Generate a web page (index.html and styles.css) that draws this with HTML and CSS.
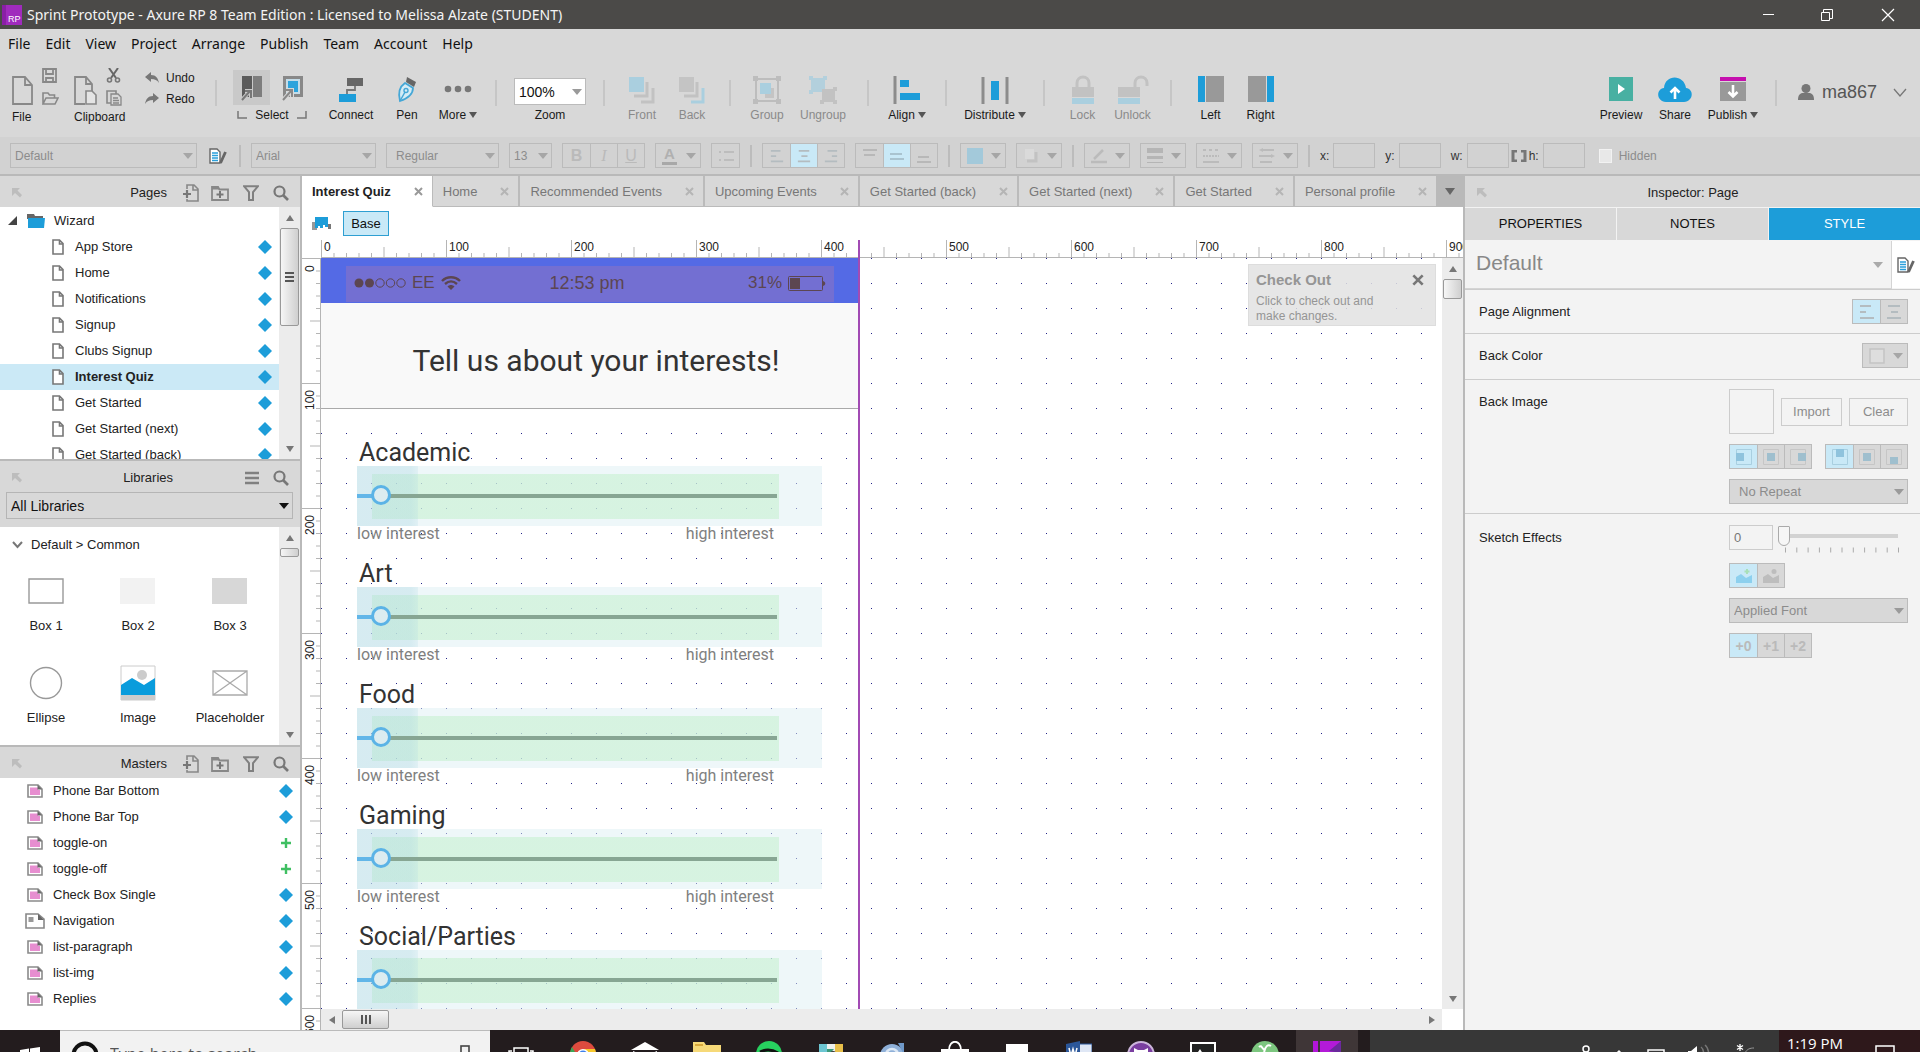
FILE: index.html
```html
<!DOCTYPE html>
<html lang="en">
<head>
<meta charset="utf-8">
<title>Sprint Prototype - Axure RP 8 Team Edition</title>
<link rel="stylesheet" href="styles.css">
</head>
<body>
<svg class="defs" aria-hidden="true">
  <defs>
    <symbol id="page" viewBox="0 0 12 16"><path d="M1 1h6.500l3.500 3.500v10.500h-10zM7.500 1v4h3.500" fill="#fff" stroke="#777" stroke-width="1.600"/></symbol>
    <symbol id="diamond" viewBox="0 0 14 14"><path d="M7 0l7 7-7 7-7-7z" fill="#1d9dd9"/></symbol>
    <symbol id="plus" viewBox="0 0 14 14"><path d="M7 2v10M2 7h10" stroke="#3fbf62" stroke-width="2.400"/></symbol>
    <symbol id="master" viewBox="0 0 16 14"><path d="M1 1h10l4 4v8h-14z" fill="#fff" stroke="#8a8a8a" stroke-width="1.600"/><path d="M3 3.500h8v2.500h2v5h-10z" fill="#e78ed0"/><path d="M10.500 1l4.500 4.500h-4.500z" fill="#666"/></symbol>
    <symbol id="navpage" viewBox="0 0 20 16"><path d="M1 1h12l6 5v9h-18z" fill="#fff" stroke="#888" stroke-width="1.600"/><path d="M3.500 4h5v5h-5z" fill="#999"/><path d="M13 1l6 6h-6z" fill="#666"/></symbol>
    <symbol id="dock" viewBox="0 0 10 10"><path d="M0 0h8l-2.500 2.500 4.500 4.500-2 2.500-5-4.500-3 3z" fill="#bdbdbd"/></symbol>
    <symbol id="addpage" viewBox="0 0 16 18"><path d="M4 5v-4h7l4 4v12h-11v-2M10 1v5h5" fill="none" stroke="#888" stroke-width="1.600"/><path d="M4 6v8M0 10h8" stroke="#777" stroke-width="2.200"/></symbol>
    <symbol id="addfolder" viewBox="0 0 18 16"><path d="M1 2h6l1.500 2.500h8.500v10.500h-16z" fill="none" stroke="#888" stroke-width="1.800"/><path d="M1 1h6l2 3.500h-8z" fill="#888"/><path d="M9 6v7M5.500 9.500h7" stroke="#777" stroke-width="2"/></symbol>
    <symbol id="filter" viewBox="0 0 16 16"><path d="M1 1.200h14l-5 6v7.800h-4v-7.800z" fill="none" stroke="#808080" stroke-width="2"/></symbol>
    <symbol id="search" viewBox="0 0 16 16"><circle cx="6.500" cy="6.500" r="5" fill="none" stroke="#777" stroke-width="2.200"/><path d="M10 10l5 5" stroke="#777" stroke-width="2.600"/></symbol>
    <symbol id="cross" viewBox="0 0 9 9"><path d="M1 1l7 7M8 1l-7 7" stroke="currentColor" stroke-width="2"/></symbol>
    <symbol id="stylepage" viewBox="0 0 18 16"><path d="M1 1h7l3 3v11h-10z" fill="#fff" stroke="#666" stroke-width="1.400"/><path d="M3 5h6M3 7.500h6M3 10h6M3 12.500h6" stroke="#2a9fda" stroke-width="1.400"/><path d="M16.500 4l-5 11" stroke="#666" stroke-width="2.800"/></symbol>
    <symbol id="al" viewBox="0 0 16 16"><path d="M1 2h11M1 8h6M1 14h14" stroke="#b4bcc0" stroke-width="2"/></symbol>
    <symbol id="ac" viewBox="0 0 16 16"><path d="M2 2h12M5 8h7M1 14h14" stroke="#b4bcc0" stroke-width="2"/></symbol>
    <symbol id="ar" viewBox="0 0 16 16"><path d="M4 2h11M9 8h6M1 14h14" stroke="#b4bcc0" stroke-width="2"/></symbol>
  </defs>
</svg>

<header class="titlebar">
  <svg class="logo" viewBox="0 0 20 20"><rect width="20" height="20" fill="#a02bbd"/><rect width="4" height="20" fill="#8a1fa6"/><text x="6" y="17" font-size="9" fill="#fff" font-family="Liberation Sans, sans-serif">RP</text></svg>
  <h1>Sprint Prototype - Axure RP 8 Team Edition : Licensed to Melissa Alzate (STUDENT)</h1>
  <div class="winbtns">
    <button aria-label="Minimize"><svg width="14" height="14"><path d="M1 6.500h11" stroke="#fff"/></svg></button>
    <button aria-label="Restore"><svg width="14" height="14"><path d="M1.500 4.500h8v8h-8zM3.500 4.500v-3h9v9h-3" fill="none" stroke="#fff"/></svg></button>
    <button aria-label="Close"><svg width="14" height="14"><path d="M1 1l12 12M13 1l-12 12" stroke="#fff" stroke-width="1.200"/></svg></button>
  </div>
</header>

<nav class="menubar">
  <button>File</button><button>Edit</button><button>View</button><button>Project</button><button>Arrange</button><button>Publish</button><button>Team</button><button>Account</button><button>Help</button>
</nav>

<section class="toolbar" aria-label="Tools">
  <div class="filegroup">
    <div class="icons">
      <svg width="22" height="30" viewBox="0 0 22 30"><path d="M1 1h12l7 8v19h-19zM13 1v8h7" fill="none" stroke="#888" stroke-width="1.800"/></svg>
      <div class="stack">
        <svg width="15" height="15" viewBox="0 0 15 15"><path d="M1 1h13v13h-13zM4 1v5h7v-5M4 14v-4h7v4" fill="none" stroke="#888" stroke-width="1.800"/></svg>
        <svg width="17" height="15" viewBox="0 0 17 15"><path d="M1 13v-11h5l1.500 2h5v3M1 13l3-6h12l-3 6z" fill="none" stroke="#888" stroke-width="1.600"/></svg>
      </div>
    </div>
    <span class="cap">File</span>
  </div>
  <div class="filegroup">
    <div class="icons">
      <svg width="24" height="30" viewBox="0 0 24 30"><path d="M11 28h-10v-27h11l6 7v7M12 1v7h6" fill="none" stroke="#888" stroke-width="1.800"/><path d="M12 15h6l4 4v9h-10z" fill="#e4e4e4" stroke="#888" stroke-width="1.600"/></svg>
      <div class="stack">
        <svg width="15" height="15" viewBox="0 0 15 15"><path d="M3 0l7 10M12 0l-7 10" stroke="#666" stroke-width="2"/><circle cx="3.500" cy="12" r="2" fill="none" stroke="#777" stroke-width="1.600"/><circle cx="11.500" cy="12" r="2" fill="none" stroke="#777" stroke-width="1.600"/></svg>
        <svg width="16" height="16" viewBox="0 0 16 16"><path d="M5 13h-4v-12h9v3" fill="none" stroke="#888" stroke-width="1.600"/><path d="M5 4h7l3 3v8h-10zM7 8h5M7 10.500h6M7 13h6" fill="none" stroke="#888" stroke-width="1.300"/></svg>
      </div>
    </div>
    <span class="cap">Clipboard</span>
  </div>
  <div class="undo">
    <button><svg width="14" height="12" viewBox="0 0 14 12"><path d="M6 0v3c5 0 7 3 8 8-2-3-4-4-8-4v3l-6-5z" fill="#777"/></svg>Undo</button>
    <button><svg width="14" height="12" viewBox="0 0 14 12"><path d="M8 0v3c-5 0-7 3-8 8 2-3 4-4 8-4v3l6-5z" fill="#777"/></svg>Redo</button>
  </div>
  <i class="sep"></i>
  <div class="selectgroup">
    <div class="icons">
      <button class="on" aria-label="Select intersected"><svg width="22" height="26" viewBox="0 0 22 26"><path d="M1 1h10v21h-10z" fill="#5a5a5a"/><path d="M12 1h9v21h-9z" fill="#7d7d7d"/><path d="M1 25l7-8M4 16h6v7" fill="none" stroke="#c9c9c9" stroke-width="4"/><path d="M1 25l8-9M4 16h6v7" fill="none" stroke="#777" stroke-width="2"/></svg></button>
      <button aria-label="Select contained"><svg width="22" height="26" viewBox="0 0 22 26"><path d="M2.500 2.500h17v18h-17z" fill="#c4dce8" stroke="#888" stroke-width="3"/><path d="M6 6h10v11h-10z" fill="#2ca3dc"/><path d="M1 25l8-9M4 15h6v7" fill="none" stroke="#d8d8d8" stroke-width="4"/><path d="M1 25l8-9M4 15h6v7" fill="none" stroke="#888" stroke-width="2"/></svg></button>
    </div>
    <span class="cap"><svg width="10" height="8"><path d="M1 0v7h9" fill="none" stroke="#777" stroke-width="1.500"/></svg>Select<svg width="10" height="8"><path d="M9 0v7h-9" fill="none" stroke="#777" stroke-width="1.500"/></svg></span>
  </div>
  <button class="tool"><svg width="26" height="26" viewBox="0 0 26 26"><path d="M9 1h16v8h-16z" fill="#666"/><path d="M17 9v4h-8v5" fill="none" stroke="#777" stroke-width="1.800"/><path d="M1 17h17v8h-17z" fill="#1d9dd9"/></svg><span>Connect</span></button>
  <button class="tool"><svg width="20" height="26" viewBox="0 0 20 26"><path d="M10 0l9 5-2 5-8-5z" fill="#666"/><path d="M8 6l8 5c0 6-4 10-13 13-2-8-1-14 5-18z" fill="#d5ecf6" stroke="#45a7d6" stroke-width="1.800"/><path d="M3 24l5-9" stroke="#45a7d6" stroke-width="1.500"/><circle cx="9" cy="13.500" r="2" fill="none" stroke="#45a7d6" stroke-width="1.400"/></svg><span>Pen</span></button>
  <button class="tool"><svg width="28" height="26" viewBox="0 0 28 26"><circle cx="4" cy="12" r="3.300" fill="#777"/><circle cx="14" cy="12" r="3.300" fill="#777"/><circle cx="24" cy="12" r="3.300" fill="#777"/></svg><span class="drop">More</span></button>
  <i class="sep"></i>
  <div class="zoom">
    <span class="sel"><select id="zoom" aria-label="Zoom"><option>100%</option></select></span>
    <label class="cap" for="zoom">Zoom</label>
  </div>
  <i class="sep"></i>
  <div class="pair">
    <button class="tool dim"><svg width="26" height="26" viewBox="0 0 26 26"><path d="M0 0h15v15h-15z" fill="#aacfdf"/><path d="M18 5v14h-13M24 11v14h-12" fill="none" stroke="#c2c2c2" stroke-width="3"/></svg><span>Front</span></button>
    <button class="tool dim"><svg width="26" height="26" viewBox="0 0 26 26"><path d="M0 0h15v15h-15z" fill="#c4c4c4"/><path d="M18 5v14h-13" fill="none" stroke="#c2c2c2" stroke-width="3"/><path d="M24 11v14h-12" fill="none" stroke="#aacfdf" stroke-width="3"/></svg><span>Back</span></button>
  </div>
  <i class="sep"></i>
  <div class="pair wide">
    <button class="tool dim"><svg width="28" height="28" viewBox="0 0 28 28"><path d="M3 3h22v22h-22z" fill="none" stroke="#bdbdbd" stroke-width="2"/><path d="M0 0h5v5h-5zM23 0h5v5h-5zM0 23h5v5h-5zM23 23h5v5h-5z" fill="#bdbdbd"/><path d="M12 12h9v10h-9z" fill="#c4c4c4"/><path d="M7 7h11v11h-11z" fill="#aacfdf"/></svg><span>Group</span></button>
    <button class="tool dim"><svg width="28" height="28" viewBox="0 0 28 28"><path d="M2 2h14v14h-14z" fill="#b3d0dd"/><path d="M0 0h4v4h-4zM14 0h4v4h-4zM0 14h4v4h-4z" fill="#b3d0dd"/><path d="M13 13h13v13h-13z" fill="#c2c2c2"/><path d="M24 11h4v4h-4zM11 24h4v4h-4zM24 24h4v4h-4z" fill="#c2c2c2"/></svg><span>Ungroup</span></button>
  </div>
  <i class="sep"></i>
  <button class="tool"><svg width="28" height="28" viewBox="0 0 28 28"><path d="M2 0v28" stroke="#8c8c8c" stroke-width="3"/><path d="M7 4h9v7h-9zM7 17h20v7h-20z" fill="#1d9dd9"/></svg><span class="drop">Align</span></button>
  <i class="sep"></i>
  <button class="tool"><svg width="28" height="28" viewBox="0 0 28 28"><path d="M2 1v27M26 1v27" stroke="#8c8c8c" stroke-width="3"/><path d="M10 5h8v19h-8z" fill="#1d9dd9"/></svg><span class="drop">Distribute</span></button>
  <i class="sep"></i>
  <div class="pair">
    <button class="tool dim"><svg width="24" height="28" viewBox="0 0 24 28"><path d="M6 12v-5c0-8 12-8 12 0v5" fill="none" stroke="#c2c2c2" stroke-width="3"/><path d="M1 11h22v10h-22z" fill="#c2c2c2"/><path d="M1 22h22v6h-22z" fill="#aacfdf"/></svg><span>Lock</span></button>
    <button class="tool dim"><svg width="32" height="28" viewBox="0 0 32 28"><path d="M18 12v-5c0-8 12-8 12 0v3" fill="none" stroke="#c2c2c2" stroke-width="3"/><path d="M1 11h22v10h-22z" fill="#c2c2c2"/><path d="M1 22h22v6h-22z" fill="#aacfdf"/></svg><span>Unlock</span></button>
  </div>
  <i class="sep"></i>
  <div class="pair">
    <button class="tool"><svg width="26" height="26"><path d="M0 0h7v26h-7z" fill="#1d9dd9"/><path d="M8 0h18v26h-18z" fill="#999"/></svg><span>Left</span></button>
    <button class="tool"><svg width="26" height="26"><path d="M19 0h7v26h-7z" fill="#1d9dd9"/><path d="M0 0h18v26h-18z" fill="#999"/></svg><span>Right</span></button>
  </div>
  <span></span>
  <div class="pair share">
    <button class="tool"><svg width="24" height="26"><path d="M0 1h24v24h-24z" fill="#48b0a2"/><path d="M9 8l7 5-7 5z" fill="#fff"/></svg><span>Preview</span></button>
    <button class="tool"><svg width="34" height="26" viewBox="0 0 34 26"><path d="M8 25c-10-1-10-13-2-14 1-14 20-14 22 0 8 1 8 13-2 14z" fill="#1d9dd9"/><path d="M17 22v-9M12.500 15.500l4.500-4.500 4.500 4.500" fill="none" stroke="#fff" stroke-width="2.600"/></svg><span>Share</span></button>
    <button class="tool"><svg width="26" height="26"><path d="M0 1h26v4h-26z" fill="#c50fae"/><path d="M0 6h26v19h-26z" fill="#999"/><path d="M13 9v11M8.500 16l4.500 4.500 4.500-4.500" fill="none" stroke="#fff" stroke-width="2.600"/></svg><span class="drop">Publish</span></button>
  </div>
  <i class="sep"></i>
  <button class="user"><svg width="16" height="16" viewBox="0 0 16 16"><circle cx="8" cy="4.500" r="4.500" fill="#777"/><path d="M0 16c0-5 2-7 5-7h6c3 0 5 2 5 7z" fill="#777"/></svg>ma867<svg class="chev" width="14" height="9"><path d="M1 1l6 7 6-7" fill="none" stroke="#777" stroke-width="1.300"/></svg></button>
</section>

<section class="formatbar" aria-label="Format">
  <span class="sel w-style"><select aria-label="Style"><option>Default</option></select></span>
  <button class="plain" aria-label="Manage styles"><svg width="18" height="16"><use href="#stylepage"/></svg></button>
  <i class="sep"></i>
  <span class="sel w-font"><select aria-label="Font"><option>Arial</option></select></span>
  <span class="sel w-weight"><select aria-label="Weight"><option>Regular</option></select></span>
  <span class="sel w-size"><select aria-label="Size"><option>13</option></select></span>
  <div class="seg"><button><b>B</b></button><button><em>I</em></button><button><u>U</u></button></div>
  <button class="dd"><u class="fontcolor">A</u></button>
  <div class="seg"><button aria-label="Bullets"><svg width="16" height="14"><path d="M1 3h2M6 3h10M1 11h2M6 11h10" stroke="#bdbdbd" stroke-width="2"/></svg></button></div>
  <i class="sep"></i>
  <div class="seg"><button aria-label="Left"><svg width="14" height="14"><use href="#al"/></svg></button><button class="on" aria-label="Center"><svg width="14" height="14"><use href="#ac"/></svg></button><button aria-label="Right"><svg width="14" height="14"><use href="#ar"/></svg></button></div>
  <div class="seg"><button aria-label="Top"><svg width="14" height="16"><path d="M0 2h14M1 7h11" stroke="#b8b8b8" stroke-width="2"/></svg></button><button class="on" aria-label="Middle"><svg width="14" height="16"><path d="M0 6h12M0 11h14" stroke="#a9c3cf" stroke-width="2"/></svg></button><button aria-label="Bottom"><svg width="14" height="16"><path d="M1 9h11M0 14h14" stroke="#b8b8b8" stroke-width="2"/></svg></button></div>
  <i class="sep"></i>
  <button class="dd" aria-label="Fill"><svg width="16" height="16"><path d="M0 0h16v16h-16z" fill="#a3c9da"/></svg></button>
  <button class="dd" aria-label="Shadow"><svg width="16" height="16"><path d="M13 4v9h-9" fill="none" stroke="#c2c2c2" stroke-width="3"/><path d="M2 1h9v10h-9z" fill="#dadada"/></svg></button>
  <i class="sep"></i>
  <button class="dd" aria-label="Line color"><svg width="16" height="16"><path d="M3 11l9-9M0 14h16" stroke="#bbb" stroke-width="2.500"/></svg></button>
  <button class="dd" aria-label="Line width"><svg width="16" height="16"><path d="M0 2.500h16" stroke="#b5b5b5" stroke-width="5"/><path d="M0 9.500h16" stroke="#b5b5b5" stroke-width="3"/><path d="M0 14.500h16" stroke="#b5b5b5"/></svg></button>
  <button class="dd" aria-label="Line style"><svg width="16" height="16"><path d="M0 2h16" stroke="#bbb" stroke-width="2" stroke-dasharray="3 3"/><path d="M0 8h16" stroke="#bbb" stroke-width="2" stroke-dasharray="2 1"/><path d="M0 14h16" stroke="#bbb" stroke-width="2"/></svg></button>
  <button class="dd" aria-label="Arrow style"><svg width="16" height="16"><path d="M2 2h13M0 8h14M1 14h12" stroke="#bbb" stroke-width="2"/><path d="M0 2l4-2v4zM16 8l-4-2v4z" fill="#bbb"/></svg></button>
  <i class="sep"></i>
  <label class="field">x: <input type="text"></label>
  <label class="field">y: <input type="text"></label>
  <div class="wh">
    <label class="field">w: <input type="text"></label>
    <svg width="16" height="12"><path d="M6 1h-4v10h4M10 1h4v10h-4" fill="none" stroke="#777" stroke-width="3"/></svg>
    <label class="field">h: <input type="text"></label>
  </div>
  <label class="hidden"><input type="checkbox">Hidden</label>
</section>

<main class="workspace">
  <aside class="left">
    <section class="panel pages">
      <header><svg width="10" height="10"><use href="#dock"/></svg><h2>Pages</h2>
        <button aria-label="Add page"><svg width="16" height="18"><use href="#addpage"/></svg></button><button aria-label="Add folder"><svg width="18" height="16"><use href="#addfolder"/></svg></button><button aria-label="Filter"><svg width="16" height="16"><use href="#filter"/></svg></button><button aria-label="Search"><svg width="16" height="16"><use href="#search"/></svg></button></header>
      <div class="body">
        <ul class="tree">
          <li class="folder"><svg width="10" height="10"><path d="M0 9l9-9v9z" fill="#444"/></svg><svg width="18" height="14" viewBox="0 0 18 14"><path d="M0 0h7l1 2h8v3h-16z" fill="#666"/><path d="M1 4h17l-1 10h-16z" fill="#1d9dd9"/></svg>Wizard</li>
          <li><svg width="12" height="16"><use href="#page"/></svg><span>App Store</span><svg width="14" height="14"><use href="#diamond"/></svg></li>
          <li><svg width="12" height="16"><use href="#page"/></svg><span>Home</span><svg width="14" height="14"><use href="#diamond"/></svg></li>
          <li><svg width="12" height="16"><use href="#page"/></svg><span>Notifications</span><svg width="14" height="14"><use href="#diamond"/></svg></li>
          <li><svg width="12" height="16"><use href="#page"/></svg><span>Signup</span><svg width="14" height="14"><use href="#diamond"/></svg></li>
          <li><svg width="12" height="16"><use href="#page"/></svg><span>Clubs Signup</span><svg width="14" height="14"><use href="#diamond"/></svg></li>
          <li class="current"><svg width="12" height="16"><use href="#page"/></svg><span>Interest Quiz</span><svg width="14" height="14"><use href="#diamond"/></svg></li>
          <li><svg width="12" height="16"><use href="#page"/></svg><span>Get Started</span><svg width="14" height="14"><use href="#diamond"/></svg></li>
          <li><svg width="12" height="16"><use href="#page"/></svg><span>Get Started (next)</span><svg width="14" height="14"><use href="#diamond"/></svg></li>
          <li><svg width="12" height="16"><use href="#page"/></svg><span>Get Started (back)</span><svg width="14" height="14"><use href="#diamond"/></svg></li>
        </ul>
        <div class="vscroll"><button class="up" aria-label="Scroll up"></button><i class="thumb long"><b></b></i><button class="down" aria-label="Scroll down"></button></div>
      </div>
    </section>

    <section class="panel libs">
      <header><svg width="10" height="10"><use href="#dock"/></svg><h2>Libraries</h2>
        <button aria-label="Options"><svg width="14" height="14"><path d="M0 2h14M0 7h14M0 12h14" stroke="#808080" stroke-width="2.600"/></svg></button><button aria-label="Search"><svg width="16" height="16"><use href="#search"/></svg></button></header>
      <div class="libpick"><span class="sel"><select aria-label="Library"><option>All Libraries</option></select></span></div>
      <div class="body">
        <div class="libbody">
          <h3><svg width="11" height="8"><path d="M1 1l4.500 5 4.500-5" fill="none" stroke="#777" stroke-width="2"/></svg>Default &gt; Common</h3>
          <div class="widgets">
            <figure><svg width="36" height="36"><path d="M1 6h34v24h-34z" fill="#fff" stroke="#999" stroke-width="1.400"/></svg><figcaption>Box 1</figcaption></figure>
            <figure><svg width="36" height="36"><path d="M0 5h35v26h-35z" fill="#f2f2f2"/></svg><figcaption>Box 2</figcaption></figure>
            <figure><svg width="36" height="36"><path d="M0 5h35v26h-35z" fill="#d7d7d7"/></svg><figcaption>Box 3</figcaption></figure>
            <figure><svg width="36" height="36"><circle cx="18" cy="18" r="15.500" fill="#fff" stroke="#999" stroke-width="1.400"/></svg><figcaption>Ellipse</figcaption></figure>
            <figure><svg width="36" height="36"><path d="M1 1h34v34h-34z" fill="#fff" stroke="#ccc"/><circle cx="22" cy="10" r="5" fill="#ccc"/><path d="M1 20l11-7 12 7 11-7v17h-34z" fill="#0a9cdc"/><path d="M1 30h34v5h-34z" fill="#ccc"/></svg><figcaption>Image</figcaption></figure>
            <figure><svg width="36" height="36"><path d="M1 6h34v24h-34zM1 6l34 24M35 6l-34 24" fill="#fff" stroke="#aaa" stroke-width="1.300"/></svg><figcaption>Placeholder</figcaption></figure>
          </div>
        </div>
        <div class="vscroll"><button class="up" aria-label="Scroll up"></button><i class="thumb tiny"></i><button class="down" aria-label="Scroll down"></button></div>
      </div>
    </section>

    <section class="panel masters">
      <header><svg width="10" height="10"><use href="#dock"/></svg><h2>Masters</h2>
        <button aria-label="Add master"><svg width="16" height="18"><use href="#addpage"/></svg></button><button aria-label="Add folder"><svg width="18" height="16"><use href="#addfolder"/></svg></button><button aria-label="Filter"><svg width="16" height="16"><use href="#filter"/></svg></button><button aria-label="Search"><svg width="16" height="16"><use href="#search"/></svg></button></header>
      <ul class="tree">
        <li><svg width="20" height="14"><use href="#master"/></svg><span>Phone Bar Bottom</span><svg width="14" height="14"><use href="#diamond"/></svg></li>
        <li><svg width="20" height="14"><use href="#master"/></svg><span>Phone Bar Top</span><svg width="14" height="14"><use href="#diamond"/></svg></li>
        <li><svg width="20" height="14"><use href="#master"/></svg><span>toggle-on</span><svg width="14" height="14"><use href="#plus"/></svg></li>
        <li><svg width="20" height="14"><use href="#master"/></svg><span>toggle-off</span><svg width="14" height="14"><use href="#plus"/></svg></li>
        <li><svg width="20" height="14"><use href="#master"/></svg><span>Check Box Single</span><svg width="14" height="14"><use href="#diamond"/></svg></li>
        <li><svg width="20" height="16"><use href="#navpage"/></svg><span>Navigation</span><svg width="14" height="14"><use href="#diamond"/></svg></li>
        <li><svg width="20" height="14"><use href="#master"/></svg><span>list-paragraph</span><svg width="14" height="14"><use href="#diamond"/></svg></li>
        <li><svg width="20" height="14"><use href="#master"/></svg><span>list-img</span><svg width="14" height="14"><use href="#diamond"/></svg></li>
        <li><svg width="20" height="14"><use href="#master"/></svg><span>Replies</span><svg width="14" height="14"><use href="#diamond"/></svg></li>
      </ul>
    </section>
  </aside>

  <section class="center">
    <div class="tabs">
      <div class="tab active"><a href="#">Interest Quiz</a><button aria-label="Close"><svg width="9" height="9"><use href="#cross"/></svg></button></div>
      <div class="tab"><a href="#">Home</a><button aria-label="Close"><svg width="9" height="9"><use href="#cross"/></svg></button></div>
      <div class="tab"><a href="#">Recommended Events</a><button aria-label="Close"><svg width="9" height="9"><use href="#cross"/></svg></button></div>
      <div class="tab"><a href="#">Upcoming Events</a><button aria-label="Close"><svg width="9" height="9"><use href="#cross"/></svg></button></div>
      <div class="tab"><a href="#">Get Started (back)</a><button aria-label="Close"><svg width="9" height="9"><use href="#cross"/></svg></button></div>
      <div class="tab"><a href="#">Get Started (next)</a><button aria-label="Close"><svg width="9" height="9"><use href="#cross"/></svg></button></div>
      <div class="tab"><a href="#">Get Started</a><button aria-label="Close"><svg width="9" height="9"><use href="#cross"/></svg></button></div>
      <div class="tab last"><a href="#">Personal profile</a><button aria-label="Close"><svg width="9" height="9"><use href="#cross"/></svg></button></div>
      <button class="tabmenu" aria-label="All tabs"></button>
    </div>
    <div class="views">
      <svg width="20" height="13" viewBox="0 0 20 13"><path d="M0 5h5v8h-5z" fill="#999"/><path d="M3 0h13v10h-3v-2h-2v3h-3v-2h-2v2h-3z" fill="#1d9dd9"/><path d="M16 7h3v5h-3z" fill="#777"/></svg>
      <button>Base</button>
    </div>
    <div class="stage">
      <div class="ruler-x">
        <svg width="100%" height="18"><defs><pattern id="rx" width="125" height="18" patternUnits="userSpaceOnUse"><path d="M.5 0v18M13 13v5M25.500 13v5M38 13v5M50.500 13v5M63 7v11M75.500 13v5M88 13v5M100.500 13v5M113 13v5" stroke="#b5b5b5"/><path d="M0 17.500h125" stroke="#b5b5b5"/></pattern></defs><rect width="100%" height="18" fill="url(#rx)"/></svg>
        <div class="nums"><span>0</span><span>100</span><span>200</span><span>300</span><span>400</span><span>500</span><span>600</span><span>700</span><span>800</span><span>900</span></div>
      </div>
      <div class="ruler-y">
        <svg width="19" height="100%"><defs><pattern id="ry" width="19" height="125" patternUnits="userSpaceOnUse"><path d="M0 .5h19M14 13h5M14 25.500h5M14 38h5M14 50.500h5M8 63h11M14 75.500h5M14 88h5M14 100.500h5M14 113h5" stroke="#b5b5b5"/><path d="M18.500 0v125" stroke="#b5b5b5"/></pattern></defs><rect width="19" height="100%" fill="url(#ry)"/></svg>
        <div class="nums"><span>0</span><span>100</span><span>200</span><span>300</span><span>400</span><span>500</span><span>600</span></div>
      </div>
      <div class="canvas">
        <svg class="dots" width="100%" height="100%"><defs><pattern id="dot" width="25" height="25" patternUnits="userSpaceOnUse"><rect width="1" height="1" fill="#26268a"/></pattern></defs><rect width="100%" height="100%" fill="url(#dot)"/></svg>
        <div class="phone">
          <div class="status"><div class="statusin">
            <div class="carrier"><svg width="52" height="12" viewBox="0 0 52 12"><circle cx="5" cy="6" r="4.500" fill="#5c4651"/><circle cx="15.500" cy="6" r="4.500" fill="#5c4651"/><g fill="none" stroke="#5c4651"><circle cx="26" cy="6" r="4.200"/><circle cx="36.500" cy="6" r="4.200"/><circle cx="47" cy="6" r="4.200"/></g></svg>EE<svg width="20" height="14" viewBox="0 0 20 14"><path d="M1 5c5-5 13-5 18 0M4 8c4-3.500 8-3.500 12 0" fill="none" stroke="#5c4651" stroke-width="2.400"/><path d="M6.500 10.500c2-2 5-2 7 0l-3.500 3.500z" fill="#5c4651"/></svg></div>
            <div class="time">12:53 pm</div>
            <div class="battery">31%<svg width="38" height="15" viewBox="0 0 38 15"><rect x=".5" y=".5" width="34" height="14" rx="1" fill="none" stroke="#5c4651"/><path d="M2 2h10v11h-10z" fill="#5c4651"/><path d="M35 5c3 1 3 4 0 5z" fill="#5c4651"/></svg></div>
          </div></div>
          <h2 class="ask">Tell us about your interests!</h2>
          <div class="quiz">
            <section><h3><label for="q1">Academic</label></h3><div class="slider"><input id="q1" type="range" min="0" max="100" step="0.5" value="3.5"></div><p><span>low interest</span><span>high interest</span></p></section>
            <section><h3><label for="q2">Art</label></h3><div class="slider"><input id="q2" type="range" min="0" max="100" step="0.5" value="3.5"></div><p><span>low interest</span><span>high interest</span></p></section>
            <section><h3><label for="q3">Food</label></h3><div class="slider"><input id="q3" type="range" min="0" max="100" step="0.5" value="3.5"></div><p><span>low interest</span><span>high interest</span></p></section>
            <section><h3><label for="q4">Gaming</label></h3><div class="slider"><input id="q4" type="range" min="0" max="100" step="0.5" value="3.5"></div><p><span>low interest</span><span>high interest</span></p></section>
            <section><h3><label for="q5">Social/Parties</label></h3><div class="slider"><input id="q5" type="range" min="0" max="100" step="0.5" value="3.5"></div></section>
          </div>
        </div>
        <div class="checkout">
          <strong>Check Out</strong><button aria-label="Dismiss"><svg width="12" height="12"><use href="#cross"/></svg></button>
          <p>Click to check out and make changes.</p>
        </div>
      </div>
      <i class="guide"></i>
      <div class="vscroll canvas-v"><button class="up" aria-label="Scroll up"></button><i class="thumb square"></i><button class="down" aria-label="Scroll down"></button></div>
      <div class="hscroll"><button class="lt" aria-label="Scroll left"></button><i class="thumb"><b></b></i><button class="rt" aria-label="Scroll right"></button></div>
    </div>
  </section>

  <aside class="inspector">
    <header><svg width="10" height="10"><use href="#dock"/></svg><h2>Inspector: Page</h2></header>
    <div class="itabs"><button>PROPERTIES</button><button>NOTES</button><button class="on">STYLE</button></div>
    <div class="istyle"><span class="sel"><select aria-label="Page style"><option>Default</option></select></span><button class="plain" aria-label="Manage styles"><svg width="18" height="16"><use href="#stylepage"/></svg></button></div>
    <div class="row align"><span>Page Alignment</span><div class="seg"><button class="on" aria-label="Left"><svg width="16" height="16"><use href="#al"/></svg></button><button aria-label="Center"><svg width="16" height="16"><use href="#ac"/></svg></button></div></div>
    <div class="row color"><span>Back Color</span><button class="dd" aria-label="Back color"><svg width="16" height="16"><path d="M1 1h14v14h-14z" fill="#dedede" stroke="#c4c4c4" stroke-width="1.500"/></svg></button></div>
    <div class="row image"><span>Back Image</span>
      <div class="stackr">
        <div class="imgpick"><i class="thumbimg"></i><button>Import</button><button>Clear</button></div>
        <div class="segs">
          <div class="seg"><button class="on" aria-label="Left"><svg width="16" height="16"><path d="M.5.500h15v15h-15z" fill="none" stroke="#a9cfe0"/><path d="M0 4h8v8h-8z" fill="#8fc3dd"/></svg></button><button aria-label="Center"><svg width="16" height="16"><path d="M.5.500h15v15h-15z" fill="none" stroke="#c6c6c6"/><path d="M4 4h8v8h-8z" fill="#9fbfce"/></svg></button><button aria-label="Right"><svg width="16" height="16"><path d="M.5.500h15v15h-15z" fill="none" stroke="#c6c6c6"/><path d="M8 4h8v8h-8z" fill="#9fbfce"/></svg></button></div>
          <div class="seg"><button class="on" aria-label="Top"><svg width="16" height="16"><path d="M.5.500h15v15h-15z" fill="none" stroke="#a9cfe0"/><path d="M4 0h8v8h-8z" fill="#8fc3dd"/></svg></button><button aria-label="Middle"><svg width="16" height="16"><path d="M.5.500h15v15h-15z" fill="none" stroke="#c6c6c6"/><path d="M4 4h8v8h-8z" fill="#9fbfce"/></svg></button><button aria-label="Bottom"><svg width="16" height="16"><path d="M.5.500h15v15h-15z" fill="none" stroke="#c6c6c6"/><path d="M4 8h8v7h-8z" fill="#9fbfce"/></svg></button></div>
        </div>
        <span class="sel indent"><select aria-label="Repeat"><option>No Repeat</option></select></span>
      </div>
    </div>
    <div class="row sketch"><label for="sk">Sketch Effects</label>
      <div class="stackr">
        <div class="sketchrow"><input id="sk" type="text" value="0"><div class="rangebox"><input type="range" aria-label="Sketchiness" min="0" max="100" value="0"><svg width="116" height="6"><path d="M1 3h115" stroke="#aaa" stroke-width="5" stroke-dasharray="1 10.300"/></svg></div></div>
        <div class="seg"><button class="on" aria-label="Color"><svg width="18" height="14"><path d="M1 8l5-3 5 4 6-3v8h-16z" fill="#8dd0ee"/><path d="M12 0v5M9.500 2.500h5" stroke="#a8e0b8" stroke-width="2"/></svg></button><button aria-label="Grayscale"><svg width="18" height="14"><path d="M1 8l5-3 5 4 6-3v8h-16z" fill="#bdbdbd"/><circle cx="12" cy="2.500" r="2.500" fill="#bdbdbd"/></svg></button></div>
        <span class="sel"><select aria-label="Sketch font"><option>Applied Font</option></select></span>
        <div class="seg small"><button class="on"><b>+0</b></button><button><b>+1</b></button><button><b>+2</b></button></div>
      </div>
    </div>
  </aside>
</main>

<footer class="taskbar">
  <button class="start" aria-label="Start"><svg width="20" height="20"><path d="M0 3l9-1.500v8.500h-9zM10 1.500l10-1.500v10h-10zM0 11h20v9h-20z" fill="#fff"/></svg></button>
  <div class="cortana"><svg width="28" height="28"><circle cx="14" cy="14" r="11.500" fill="none" stroke="#111" stroke-width="4"/></svg><input type="text" placeholder="Type here to search" aria-label="Search"><svg class="mic" width="10" height="20"><rect x="1" y="1" width="8" height="14" fill="none" stroke="#444" stroke-width="1.600"/></svg></div>
  <div class="apps">
    <button aria-label="Task view"><svg width="26" height="20"><path d="M6 20v-13h14v13M4 10h-3v10M22 10h3v10" fill="none" stroke="#fff" stroke-width="1.500"/></svg></button>
    <button aria-label="Chrome"><svg width="26" height="26"><circle cx="13" cy="13" r="13" fill="#dd4b3e"/><path d="M0 14a13 13 0 0 1 2-8l6 10z" fill="#3aa757"/><path d="M14 8h11a13 13 0 0 1-5 16z" fill="#f7c92c"/><circle cx="13" cy="14" r="6" fill="#fff"/><circle cx="13" cy="14" r="4.600" fill="#3f80ec"/></svg></button>
    <button aria-label="Mail"><svg width="30" height="22"><path d="M1 9l14-8 14 8z" fill="#fff"/><path d="M3 10l12 5 12-5v12h-24z" fill="#fff"/></svg></button>
    <button aria-label="Files"><svg width="28" height="22"><path d="M0 1h11l2 3h15v18h-28z" fill="#f6d978"/><path d="M2 3h8v2h-8z" fill="#d9a93c"/></svg></button>
    <button aria-label="Spotify"><svg width="26" height="26"><circle cx="13" cy="13" r="13" fill="#27d15f"/><path d="M4 11c6-3 13-2 18 1" fill="none" stroke="#111" stroke-width="3"/></svg></button>
    <button aria-label="Snipping"><svg width="24" height="24"><path d="M0 3h24v21h-24z" fill="#eef1ee"/><path d="M0 3h8v8h-8z" fill="#6cc5d1"/><path d="M16 3h8v8h-8z" fill="#e8bf4a"/><path d="M8 8h7l-7 8z" fill="#3b9a7a"/><circle cx="14" cy="13" r="3" fill="#333"/></svg></button>
    <button aria-label="Reader"><svg width="26" height="26"><circle cx="12" cy="15" r="12" fill="#8fb0d8"/><circle cx="12" cy="14" r="6" fill="none" stroke="#dce8f5" stroke-width="2.500"/><path d="M18 2h6v12" fill="#7099c9"/></svg></button>
    <button aria-label="Store"><svg width="28" height="22"><path d="M8 9c0-11 12-11 12 0" fill="none" stroke="#fff" stroke-width="1.800"/><path d="M0 8h28v14h-28z" fill="#fff"/></svg></button>
    <button aria-label="Notes"><svg width="22" height="22"><path d="M0 3h22v19h-22z" fill="#fff"/></svg></button>
    <button aria-label="Word"><svg width="26" height="24"><path d="M12 3h14v21h-14z" fill="#dfe7f5" stroke="#2b579a"/><path d="M0 3l14-3v24h-14z" fill="#2b579a"/><path d="M3 7l2 8 2-7 2 7 2-8" fill="none" stroke="#fff" stroke-width="1.500"/></svg></button>
    <button aria-label="GitHub"><svg width="28" height="28"><circle cx="14" cy="14" r="13" fill="#7a3ea0" stroke="#ccb5dc" stroke-width="2"/><path d="M7 7l4 2h6l4-2v9h-14z" fill="#fff"/></svg></button>
    <button aria-label="Photos"><svg width="26" height="22"><path d="M1 2h24v20h-24z" fill="#222" stroke="#fff" stroke-width="2"/><path d="M6 14l4-6 5 8h-9z" fill="#fff"/></svg></button>
    <button aria-label="Scientific"><svg width="28" height="28"><circle cx="14" cy="14" r="14" fill="#7cc67f"/><path d="M8 6c3-3 3 3 6 3M13 12c1-7 4-9 7-7" fill="none" stroke="#fff" stroke-width="2"/></svg></button>
    <button class="current" aria-label="Axure RP"><svg width="28" height="24"><path d="M0 0h5v24h-5z" fill="#b215d8"/><path d="M7 0h21v24h-21z" fill="#b31ad8"/><path d="M16 10l12-10v12z" fill="#6a2a9c"/></svg></button>
  </div>
  <div class="tray">
    <svg class="t1" width="10" height="14"><circle cx="5" cy="5" r="3" fill="none" stroke="#fff" stroke-width="1.500"/><path d="M1 12c1-3 7-3 8 0" fill="none" stroke="#fff"/></svg>
    <svg class="t2" width="12" height="8"><path d="M1 7l5-5 5 5" fill="none" stroke="#fff" stroke-width="1.500"/></svg>
    <svg class="t2" width="18" height="10"><path d="M1 1h16v9h-16z" fill="none" stroke="#fff" stroke-width="1.500"/></svg>
    <svg class="t1" width="26" height="14"><path d="M1 7h3l6-5v12h-9z" fill="#fff"/><path d="M14 3c3 2 3 8 3 11M18 1c4 3 4 9 4 13" fill="none" stroke="#777" stroke-width="1.500"/></svg>
    <svg class="t1" width="20" height="14"><path d="M5 0v7M2 1.500l6 4M8 1.500l-6 4" stroke="#fff" stroke-width="1.300"/><path d="M10 9c2-4 5-5 9-5" fill="none" stroke="#999"/></svg>
  </div>
  <div class="clock"><time>1:19 PM</time><svg width="20" height="14"><path d="M1 1h18v13h-18z" fill="none" stroke="#fff" stroke-width="1.500"/></svg></div>
</footer>
</body>
</html>
```
FILE: styles.css
```css
* { box-sizing: border-box; }
html, body { height: 100%; }
body {
  margin: 0;
  display: flex;
  flex-direction: column;
  overflow: hidden;
  background: #d8d8d8;
  color: #222;
  font: 13px/16px "Liberation Sans", Arial, sans-serif;
}
button, input, select { font: inherit; color: inherit; margin: 0; padding: 0; border: 0; background: none; border-radius: 0; }
select { appearance: none; width: 100%; height: 100%; }
h1, h2, h3, p, ul, figure { margin: 0; padding: 0; font-weight: normal; font-size: inherit; list-style: none; }
svg { display: block; flex: none; }
a { color: inherit; text-decoration: none; }
.defs { width: 0; height: 0; position: absolute; }

/* title bar and menus */
.titlebar { flex: none; height: 29px; background: #4b4a48; color: #f4f4f4; display: flex; align-items: center; padding-left: 2px; gap: 5px; }
.logo { width: 20px; height: 20px; }
.titlebar h1 { flex: 1; font: 14px/20px "Noto Sans", "Open Sans", sans-serif; }
.winbtns { display: flex; }
.winbtns button { width: 58px; height: 29px; display: grid; place-items: center; }
.winbtns button:last-child { width: 64px; }
.menubar { flex: none; height: 30px; display: flex; align-items: center; gap: 15px; padding-left: 8px; font: 14px/20px "Noto Sans", "Open Sans", sans-serif; color: #111; }

/* main toolbar */
.toolbar {
  flex: none; height: 78px; padding-left: 12px; display: grid;
  grid-template-columns: 62px 69px 72px 2px 110px 48px 64px 38px 20px 106px 2px 124px 2px 128px 10px 76px 2px 96px 2px 125px 2px 127px 1fr 170px 13px 143px;
  font-size: 12px; color: #1a1a1a;
}
.sep { width: 2px; height: 26px; background: #c6c6c6; justify-self: end; align-self: start; margin-top: 21px; }
.tool { display: flex; flex-direction: column; align-items: center; padding-top: 16px; min-width: 0; }
.tool svg { height: 30px; overflow: visible; padding: 1px 0; }
.tool span { line-height: 20px; white-space: nowrap; }
.dim span { color: #8a8a8a; }
.drop::after { content: ""; display: inline-block; margin-left: 3px; vertical-align: 1px; border: 4px solid transparent; border-top: 6px solid #555; border-bottom: 0; }
.pair { display: flex; justify-content: center; }
.pair .tool { width: 50px; }
.pair.wide .tool { width: 56px; }
.pair.share { justify-content: flex-start; }
.pair.share .tool { width: 54px; }
.pair.share .tool:last-child { width: 62px; }
.filegroup { display: flex; flex-direction: column; padding-top: 9px; }
.filegroup .icons { display: flex; gap: 8px; height: 38px; align-items: flex-end; }
.filegroup .stack { display: flex; flex-direction: column; justify-content: space-between; height: 38px; }
.filegroup .cap { line-height: 22px; }
.undo { display: flex; flex-direction: column; padding-top: 8px; }
.undo button { display: flex; align-items: center; gap: 7px; height: 21px; padding-left: 2px; }
.selectgroup { display: flex; flex-direction: column; align-items: center; padding-top: 11px; }
.selectgroup .icons { display: flex; gap: 4px; }
.selectgroup .icons button { width: 37px; height: 35px; display: grid; place-items: center; }
.selectgroup .icons .on { background: #c9c9c9; }
.selectgroup .cap { display: flex; align-items: center; gap: 8px; line-height: 20px; }
.zoom { display: flex; flex-direction: column; align-items: center; padding-top: 19px; }
.zoom .sel { width: 72px; height: 27px; background: #fff; border: 1px solid #bbb; font-size: 14px; color: #111; }
.zoom .cap { line-height: 20px; }
.user { display: flex; align-items: center; gap: 8px; padding-left: 21px; height: 66px; font-size: 18px; color: #555; }
.user .chev { margin-left: 8px; }

/* drop-down with a drawn arrow */
.sel { display: grid; align-items: center; }
.sel select { grid-area: 1 / 1; padding-left: 4px; }
.sel::after { content: ""; grid-area: 1 / 1; justify-self: end; margin-right: 3px; pointer-events: none; border: 5px solid transparent; border-top: 6px solid #9a9a9a; border-bottom: 0; }

/* format bar */
.formatbar { flex: none; height: 39px; display: flex; align-items: center; gap: 10px; padding: 0 10px; background: #d2d2d2; border-bottom: 2px solid #b9b9b9; font-size: 12px; color: #8c8c8c; }
.formatbar > * { flex: none; }
.formatbar .sep { height: 22px; margin: 0; align-self: center; background: #bcbcbc; }
.formatbar .sel { height: 25px; border: 1px solid #bbb; }
.formatbar .sel::after { border-top-color: #a6a6a6; }
.w-style { width: 187px; }
.w-font { width: 125px; }
.w-weight { width: 113px; }
.w-weight select { padding-left: 9px; }
.w-size { width: 43px; }
.plain { width: 22px; height: 24px; display: grid; place-items: center; }
.seg { display: flex; height: 25px; border: 1px solid #bbb; }
.seg button { width: 27px; display: grid; place-items: center; color: #bababa; font-size: 16px; }
.seg button + button { border-left: 1px solid #bbb; }
.seg .on { background: #c9e9f7; }
.seg em { font-family: "Liberation Serif", serif; }
.dd { width: 46px; height: 25px; border: 1px solid #bbb; display: flex; align-items: center; justify-content: space-between; padding: 0 4px 0 6px; color: #b0b0b0; }
.dd::after { content: ""; border: 5px solid transparent; border-top: 6px solid #a6a6a6; border-bottom: 0; }
.fontcolor { font: bold 15px/16px "Liberation Sans", sans-serif; text-decoration: none; border-bottom: 3px solid #a8a8a8; padding: 0 2px; }
.field { display: flex; align-items: center; gap: 4px; color: #333; }
.field input { width: 42px; height: 25px; border: 1px solid #bbb; }
.wh { display: flex; align-items: center; gap: 2px; }
.hidden { display: flex; align-items: center; gap: 7px; margin-left: 4px; }
.hidden input { appearance: none; width: 13px; height: 14px; background: #e8e8e8; border: 1px solid #f2f2f2; }

/* workspace */
.workspace { flex: 1; min-height: 0; display: grid; grid-template-columns: 302px 1fr 457px; }
.left { display: flex; flex-direction: column; border-right: 2px solid #b9b9b9; min-height: 0; }
.left header, .inspector header { flex: none; display: flex; align-items: center; height: 31px; padding: 2px 11px 0 12px; background: #d8d8d8; color: #222; }
.left header h2 { flex: 1; text-align: right; margin-right: 16px; }
.left header button { width: 30px; display: grid; justify-items: end; }
.left header button:first-of-type { width: 16px; }
.panel { background: #fff; display: flex; flex-direction: column; min-height: 0; }
.pages, .libs { border-bottom: 2px solid #b9b9b9; }
.pages { flex: 0 0 285px; }
.libs { flex: 0 0 286px; }
.masters { flex: 1; }
.body { flex: 1; min-height: 0; display: grid; grid-template-columns: 1fr 21px; grid-template-rows: 100%; overflow: hidden; }
.tree li { display: flex; align-items: center; height: 26px; padding: 0 7px 0 25px; gap: 8px; }
.tree span { flex: 1; }
.pages .tree { padding-top: 1px; }
.pages .tree li { padding: 0 7px 0 52px; gap: 11px; }
.pages .tree .folder { padding-left: 8px; gap: 9px; }
.pages .tree .current { background: #cbe9f6; font-weight: bold; }
.libs header h2 { margin-right: 70px; }
.libpick { background: #d8d8d8; padding: 0 7px 8px 6px; }
.libpick .sel { height: 27px; border: 1px solid #b5b5b5; font-size: 14px; color: #111; }
.libpick .sel::after { border-top-color: #111; }
.libbody h3 { display: flex; align-items: center; gap: 8px; padding: 10px 0 8px 12px; }
.widgets { display: grid; grid-template-columns: repeat(3, 92px); grid-auto-rows: 92px; }
.widgets figure { display: flex; flex-direction: column; align-items: center; gap: 7px; padding-top: 12px; }
.libs figcaption { line-height: 20px; }

/* scroll bars */
.vscroll { background: #ececec; display: flex; flex-direction: column; padding: 0 1px; }
.up, .down { height: 21px; display: grid; place-items: center; }
.down { margin-top: auto; }
.up::after { content: ""; border: 4px solid transparent; border-bottom: 6px solid #777; border-top: 0; }
.down::after { content: ""; border: 4px solid transparent; border-top: 6px solid #777; border-bottom: 0; }
.thumb { display: grid; place-items: center; border: 1px solid #999; border-radius: 2px; background: linear-gradient(90deg, #f6f6f6, #cfcfcf); }
.long { height: 98px; }
.long b { width: 9px; height: 10px; background: repeating-linear-gradient(#555 0 2px, transparent 2px 4px); }
.tiny { height: 9px; }
.square { height: 20px; }
.hscroll { grid-area: 3 / 2; background: #ececec; display: flex; align-items: center; }
.hscroll .thumb { width: 47px; height: 19px; background: linear-gradient(#f6f6f6, #cfcfcf); }
.hscroll b { width: 10px; height: 9px; background: repeating-linear-gradient(90deg, #555 0 2px, transparent 2px 4px); }
.lt, .rt { width: 21px; height: 21px; display: grid; place-items: center; }
.rt { margin-left: auto; }
.lt::after { content: ""; border: 4px solid transparent; border-right: 6px solid #777; border-left: 0; }
.rt::after { content: ""; border: 4px solid transparent; border-left: 6px solid #777; border-right: 0; }

/* tabs and canvas */
.center { display: flex; flex-direction: column; min-width: 0; min-height: 0; background: #fff; }
.tabs { flex: none; display: flex; height: 31px; background: #d8d8d8; }
.tab { display: flex; align-items: center; gap: 23px; padding: 1px 9px 0 10px; border-right: 2px solid #bbb; border-bottom: 1px solid #bbb; color: #777; white-space: nowrap; }
.tab button { color: #b5b5b5; }
.tab.active { background: #fff; color: #222; font-weight: bold; border-bottom-color: #fff; border-right-width: 1px; }
.tab.active button { color: #999; }
.tab.last { border-right: 0; }
.tabmenu { flex: 1; background: #b9b9b9; display: grid; place-items: center; }
.tabmenu::after { content: ""; border: 5px solid transparent; border-top: 7px solid #666; border-bottom: 0; }
.views { flex: none; height: 33px; display: flex; align-items: center; gap: 11px; padding-left: 10px; }
.views button { width: 46px; height: 25px; border: 1px solid #2e9fd2; background: #c9e9f7; color: #111; }
.stage { flex: 1; min-height: 0; position: relative; display: grid; grid-template-columns: 19px 1fr 21px; grid-template-rows: 18px 1fr 21px; overflow: hidden; }
.ruler-x { grid-area: 1 / 2 / 2 / 4; display: grid; overflow: hidden; font-size: 12px; line-height: 14px; }
.ruler-x > *, .ruler-y > * { grid-area: 1 / 1; }
.ruler-x .nums { display: flex; }
.ruler-x .nums span { flex: 0 0 125px; padding-left: 3px; }
.ruler-y { grid-area: 2 / 1 / 4 / 2; display: grid; overflow: hidden; min-height: 0; font-size: 12px; line-height: 16px; }
.ruler-y .nums { min-height: 0; }
.ruler-y .nums span { display: block; height: 125px; padding-bottom: 7px; writing-mode: vertical-rl; transform: rotate(180deg); text-align: right; }
.canvas { grid-area: 2 / 2; position: relative; overflow: hidden; min-height: 0; }
.dots { position: absolute; inset: 0; }
.phone { position: absolute; top: 0; left: 0; width: 538px; font-family: Roboto, sans-serif; color: #333; }
.status { height: 45px; padding: 8px 25px 1px; background: #546ae5; }
.statusin { height: 36px; padding: 0 8px 2px; display: grid; grid-template-columns: 1fr auto 1fr; align-items: center; background: #736fd2; color: #5c4651; font: 17px/20px "Liberation Sans", sans-serif; }
.carrier { display: flex; align-items: center; gap: 6px; }
.time { font-size: 18px; margin-right: 6px; }
.battery { display: flex; align-items: center; justify-content: flex-end; gap: 6px; }
.ask { height: 106px; background: #f9f9f9; border-bottom: 1px solid #aaa; text-align: center; padding: 38px 0 0 12px; font-size: 30px; line-height: 40px; }
.quiz { padding: 29px 0 0 36px; }
.quiz section { height: 121px; }
.quiz h3 { font-size: 25px; line-height: 26px; padding: 2px 0 0 2px; }
.quiz .slider {
  width: 465px; height: 60px; display: flex; align-items: center;
  background:
    linear-gradient(90deg, rgba(170, 214, 226, .35) 54px, rgba(170, 214, 226, .2) 61px, transparent 61px),
    linear-gradient(rgba(195, 240, 205, .55), rgba(195, 240, 205, .55)) 15px 8px / 407px 45px no-repeat,
    rgba(222, 240, 244, .5);
}
.quiz input { appearance: none; width: 420px; height: 20px; }
.quiz input::-webkit-slider-runnable-track { height: 4px; background: linear-gradient(90deg, #62b6e8 16px, #87a693 16px); }
.quiz input::-webkit-slider-thumb { appearance: none; width: 20px; height: 20px; margin-top: -9px; border: 3px solid #5bb3e6; border-radius: 50%; background: #dcecf0; }
.quiz p { width: 417px; display: flex; justify-content: space-between; font-size: 16px; line-height: 16px; color: #808080; }
.guide { position: absolute; left: 556px; top: 0; bottom: 21px; width: 2px; background: #a24bb4; }
.checkout { position: absolute; right: 6px; top: 6px; width: 188px; height: 62px; padding: 6px 11px 0 7px; display: grid; grid-template-columns: 1fr auto; align-content: start; align-items: center; background: rgba(226, 226, 226, .85); border: 1px solid #ddd; color: #959595; }
.checkout strong { font-size: 15px; line-height: 18px; }
.checkout button { color: #777; }
.checkout p { grid-column: 1 / 3; width: 124px; margin-top: 5px; font-size: 12px; line-height: 15px; }
.canvas-v { grid-area: 2 / 3; min-height: 0; }

/* inspector */
.inspector { border-left: 2px solid #b9b9b9; background: #f3f3f3; }
.inspector h2 { flex: 1; text-align: center; margin-right: 10px; }
.itabs { display: grid; grid-template-columns: repeat(3, 1fr); gap: 1px; padding: 1px 0; background: #f3f3f3; }
.itabs button { height: 32px; background: #d8d8d8; color: #111; }
.itabs .on { background: #1d9dd9; color: #fff; }
.istyle { display: flex; height: 49px; border-bottom: 1px solid #ccc; font-size: 21px; color: #888; }
.istyle .sel { flex: 1; border: 1px solid #d4d4d4; border-width: 0 1px 1px 0; }
.istyle .sel select { padding: 0 0 4px 11px; }
.istyle .sel::after { margin-right: 8px; border-top-color: #aaa; }
.istyle .plain { width: 28px; height: 47px; background: #fff; }
.row { display: flex; justify-content: space-between; align-items: flex-start; padding: 9px 12px 10px 14px; border-bottom: 1px solid #ccc; }
.row > span, .row > label { line-height: 26px; }
.row .seg, .row .dd, .row .stackr > .sel { background: #d8d8d8; }
.row .seg { align-self: flex-start; }
.row.align { padding-bottom: 8px; }
.row.image { padding-bottom: 9px; }
.row.sketch { border-bottom: 0; padding-top: 11px; }
.stackr { display: flex; flex-direction: column; gap: 10px; width: 179px; }
.imgpick { display: grid; grid-template-columns: 45px 61px 59px; gap: 7px; align-items: center; color: #8c8c8c; }
.imgpick button { height: 28px; border: 1px solid #ccc; }
.thumbimg { height: 45px; border: 1px solid #ccc; }
.segs { display: flex; justify-content: space-between; }
.small button { font-size: 14px; }
.stackr > .sel { height: 25px; border: 1px solid #bbb; color: #8c8c8c; }
.stackr > .indent select { padding-left: 9px; }
.sketchrow { display: flex; gap: 5px; height: 28px; }
.sketchrow > input { width: 44px; height: 25px; border: 1px solid #ccc; padding-left: 4px; color: #777; }
.rangebox { display: flex; flex-direction: column; }
.rangebox input { appearance: none; width: 120px; height: 22px; }
.rangebox svg { margin-left: 6px; }
.rangebox input::-webkit-slider-runnable-track { height: 4px; background: #d2d2d2; }
.rangebox input::-webkit-slider-thumb { appearance: none; width: 12px; height: 20px; margin-top: -8px; border: 1px solid #aaa; border-radius: 1px 1px 6px 6px; background: #f6f6f6; }

/* task bar, partly below the screen edge */
.taskbar { flex: none; height: 22px; overflow: hidden; display: flex; align-items: flex-start; background: #231c1e; color: #fff; font: 15px/20px "Open Sans", "Noto Sans", sans-serif; }
.start { width: 60px; height: 40px; padding: 14px 0 0 20px; }
.cortana { width: 430px; height: 40px; display: flex; align-items: flex-start; background: #f2f2f2; border-top: 1px solid #bbb; padding: 10px 20px 0 11px; color: #555; }
.cortana input { flex: 1; height: 24px; margin: 1px 0 0 11px; font-size: 16px; }
.cortana input::placeholder { color: #555; opacity: 1; }
.mic { margin-top: 4px; }
.apps { display: flex; }
.apps button { width: 62px; height: 40px; display: grid; justify-items: center; align-items: start; padding-top: 11px; }
.apps .current { background: #3f3637; }
.tray { flex: 1; margin-left: 12px; height: 40px; background: #373737; display: flex; gap: 22px; justify-content: flex-end; padding-right: 24px; }
.t1 { margin-top: 14px; }
.t2 { margin-top: 19px; }
.clock { width: 141px; height: 40px; background: #2e181b; display: flex; gap: 32px; padding: 3px 0 0 8px; }
.clock svg { margin-top: 12px; }
```
